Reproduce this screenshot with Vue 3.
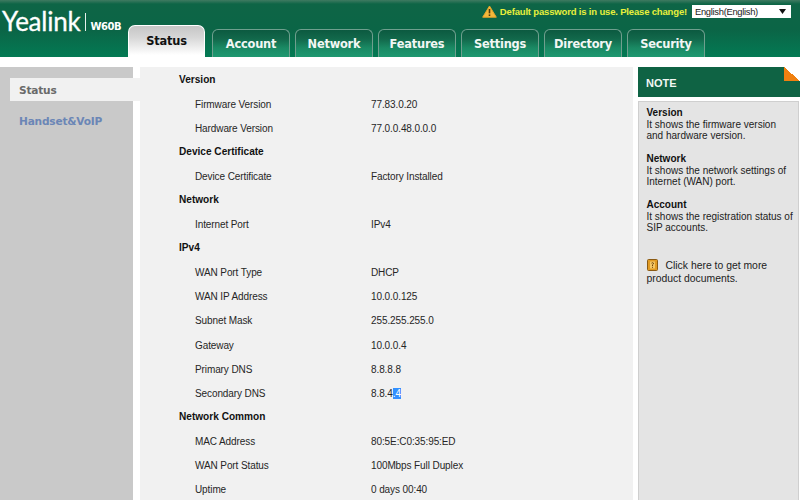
<script setup>
const tabs = ['Status', 'Account', 'Network', 'Features', 'Settings', 'Directory', 'Security']
const rows = [
  { head: 'Version' },
  { k: 'Firmware Version', v: '77.83.0.20' },
  { k: 'Hardware Version', v: '77.0.0.48.0.0.0' },
  { head: 'Device Certificate' },
  { k: 'Device Certificate', v: 'Factory Installed' },
  { head: 'Network' },
  { k: 'Internet Port', v: 'IPv4' },
  { head: 'IPv4' },
  { k: 'WAN Port Type', v: 'DHCP' },
  { k: 'WAN IP Address', v: '10.0.0.125' },
  { k: 'Subnet Mask', v: '255.255.255.0' },
  { k: 'Gateway', v: '10.0.0.4' },
  { k: 'Primary DNS', v: '8.8.8.8' },
  { k: 'Secondary DNS', v: '8.8.4', sel: '.4' },
  { head: 'Network Common' },
  { k: 'MAC Address', v: '80:5E:C0:35:95:ED' },
  { k: 'WAN Port Status', v: '100Mbps Full Duplex' },
  { k: 'Uptime', v: '0 days 00:40' },
]
const notes = [
  { t: 'Version', d: 'It shows the firmware version\nand hardware version.' },
  { t: 'Network', d: 'It shows the network settings of\nInternet (WAN) port.' },
  { t: 'Account', d: 'It shows the registration status of\nSIP accounts.' },
]
</script>

<template>
  <div class="page">
    <header class="header">
      <div class="brand">
        <span class="logo">Yealink</span>
        <span class="rule"></span>
        <span class="model">W60B</span>
      </div>
      <div class="header-right">
        <div class="topbar">
          <svg class="warn" width="15" height="13" viewBox="0 0 15 13">
            <path d="M7.5 1 L14.3 12.2 H0.7 Z" fill="#f5b83c" stroke="#e9a62a" stroke-width="1" stroke-linejoin="round"/>
            <path d="M7.5 4 V8.4" stroke="#4a3a10" stroke-width="1.6"/>
            <path d="M7.5 9.4 V11" stroke="#4a3a10" stroke-width="1.6"/>
          </svg>
          <span class="warn-text">Default password is in use. Please change!</span>
          <div class="lang">
            <span>English(English)</span>
            <svg width="7" height="5" viewBox="0 0 7 5"><path d="M0 0H7L3.5 5Z" fill="#111"/></svg>
          </div>
        </div>
        <nav class="tabs">
          <div v-for="(t, i) in tabs" :key="t" class="tab" :class="{ active: i === 0 }">{{ t }}</div>
        </nav>
      </div>
    </header>

    <main class="main">
      <aside class="side">
        <div class="side-item current">Status</div>
        <div class="side-item">Handset&amp;VoIP</div>
      </aside>
      <section class="content">
        <template v-for="r in rows" :key="(r.head || '') + (r.k || '')">
          <div v-if="r.head" class="row head">{{ r.head }}</div>
          <div v-else class="row">
            <span class="key">{{ r.k }}</span>
            <span class="val">{{ r.v }}<span v-if="r.sel" class="sel">{{ r.sel }}</span></span>
          </div>
        </template>
      </section>
      <aside class="note">
        <div class="note-head">
          NOTE
          <span class="corner"></span>
        </div>
        <div class="note-body">
          <div v-for="n in notes" :key="n.t" class="note-block">
            <b>{{ n.t }}</b>
            <p>{{ n.d }}</p>
          </div>
          <div class="docs">
            <svg class="book" width="11" height="12" viewBox="0 0 11 12">
              <rect x="0.5" y="0.5" width="10" height="11" rx="1" fill="#e09a22" stroke="#8a5a14"/>
              <rect x="3" y="2.5" width="5" height="7" fill="#f4c766"/>
              <path d="M4.5 4.2 Q5.5 3.2 6.5 4.2 Q6.5 5.2 5.5 5.8 V7 M5.5 7.8 V8.8" stroke="#6d4208" fill="none"/>
            </svg>
            <span class="docs-text">Click here to get more</span>
            <br>product documents.
          </div>
        </div>
      </aside>
    </main>
  </div>
</template>

<style>
html, body { margin: 0; padding: 0; background: #fff; overflow: hidden; }
</style>

<style scoped>
.page {
  width: 800px;
  height: 500px;
  overflow: hidden;
  font-family: "Liberation Sans", "DejaVu Sans", sans-serif;
  font-size: 10px;
  letter-spacing: -0.1px;
  color: #222;
  background: #fff;
}
.header {
  height: 57px;
  display: flex;
  background: linear-gradient(180deg, #3f7a61 0, #0e6546 4px, #0b6546 30px, #037a54 57px);
}
.brand {
  width: 128px;
  height: 57px;
  flex: none;
  display: flex;
  align-items: flex-start;
  padding: 10px 0 0 2px;
  box-sizing: border-box;
  color: #fff;
}
.logo {
  font-family: "Lato", sans-serif;
  font-size: 26px;
  line-height: 22px;
  letter-spacing: -0.25px;
  -webkit-text-stroke: 0.3px #fff;
}
.rule {
  width: 1px;
  height: 18px;
  background: #e6f0ec;
  margin: 3px 4px 0 5px;
}
.model {
  font-family: "DejaVu Sans", sans-serif;
  font-weight: 700;
  font-size: 10px;
  line-height: 12px;
  margin-top: 11px;
  letter-spacing: -0.4px;
}
.header-right {
  flex: 1;
  min-width: 0;
  display: flex;
  flex-direction: column;
}
.topbar {
  height: 25px;
  display: flex;
  align-items: flex-start;
  justify-content: flex-end;
  padding: 5px 9px 0 0;
  box-sizing: border-box;
}
.warn { margin-right: 3px; margin-top: 0; }
.warn-text {
  font-weight: 700;
  font-size: 9.5px;
  letter-spacing: -0.17px;
  line-height: 13px;
  color: #e8f03c;
  margin-right: 5px;
  white-space: nowrap;
}
.lang {
  width: 99px;
  height: 13px;
  background: #fff;
  color: #222;
  font-size: 9.4px;
  letter-spacing: -0.3px;
  line-height: 13px;
  display: flex;
  align-items: center;
  justify-content: space-between;
  padding: 0 5px 0 3px;
  box-sizing: border-box;
}
.tabs {
  display: flex;
  align-items: flex-end;
  gap: 5px;
  height: 32px;
}
.tab {
  width: 78px;
  height: 28px;
  box-sizing: border-box;
  border: 1px solid #6f9f8e;
  border-bottom: 0;
  border-radius: 6px 6px 0 0;
  background: linear-gradient(180deg, #0c5a40 0, #12684b 9px, #1a8a64 18px, #1f9a72 28px);
  color: #f2f7f4;
  font-family: "DejaVu Sans", sans-serif;
  font-weight: 700;
  font-size: 11.4px;
  letter-spacing: -0.2px;
  line-height: 29px;
  text-align: center;
}
.tab.active {
  width: 77px;
  height: 32px;
  border: 1px solid #fff;
  border-bottom: 0;
  margin-right: 2px;
  background: linear-gradient(180deg, #c6c6c6 0, #d8d8d8 12px, #fff 29px);
  color: #111;
  line-height: 31px;
  border-radius: 7px 7px 0 0;
}
.main {
  display: flex;
  margin-top: 10px;
  height: 433px;
}
.side {
  width: 133px;
  flex: none;
  background: #c9c9c9;
  padding-top: 11px;
  box-sizing: border-box;
  margin-right: 7px;
}
.side-item {
  height: 23px;
  margin: 0 -7px 8px 10px;
  padding-left: 9px;
  font-family: "DejaVu Sans", sans-serif;
  font-weight: 700;
  font-size: 10.6px;
  letter-spacing: -0.2px;
  line-height: 25px;
  color: #6b86b6;
}
.side-item.current {
  background: #f1f1f1;
  color: #6a6a6a;
}
.content {
  width: 493px;
  flex: none;
  background: #f1f1f1;
  box-sizing: border-box;
  margin-right: 5px;
}
.row {
  height: 24.1px;
  box-sizing: border-box;
  padding-top: 2px;
  display: flex;
  align-items: center;
  padding-left: 55px;
  color: #262626;
  white-space: nowrap;
}
.row.head {
  padding-top: 0;
  padding-left: 39px;
  font-weight: 700;
  font-size: 10.1px;
  letter-spacing: 0;
  color: #111;
}
.key { width: 176px; flex: none; }
.sel { background: #3390ff; color: #fff; }
.note {
  width: 162px;
  flex: none;
  display: flex;
  flex-direction: column;
}
.note-head {
  position: relative;
  height: 30px;
  background: #0f6344;
  color: #f2f7f4;
  font-weight: 700;
  font-size: 11px;
  letter-spacing: 0;
  line-height: 32px;
  padding-left: 8px;
  flex: none;
}
.corner {
  position: absolute;
  top: 0;
  right: 0;
  width: 16px;
  height: 14px;
  background: linear-gradient(to top right, #f08010 50%, #fff 50%);
}
.note-body {
  margin-top: 4px;
  flex: 1;
  background: #e4e4e4;
  border: 1px solid #cfcfcf;
  border-bottom: 0;
  padding: 5px 3px 0 7.5px;
  font-size: 10px;
  letter-spacing: 0;
  line-height: 11.5px;
  color: #222;
  margin-right: 1px;
}
.note-block { margin-bottom: 11.5px; }
.note-block b { color: #111; display: block; }
.note-block p { margin: 0; white-space: pre-line; }
.docs {
  margin-top: 25px;
  font-size: 10.4px;
  line-height: 13px;
}
.book { vertical-align: -2px; margin-right: 8px; }
</style>
